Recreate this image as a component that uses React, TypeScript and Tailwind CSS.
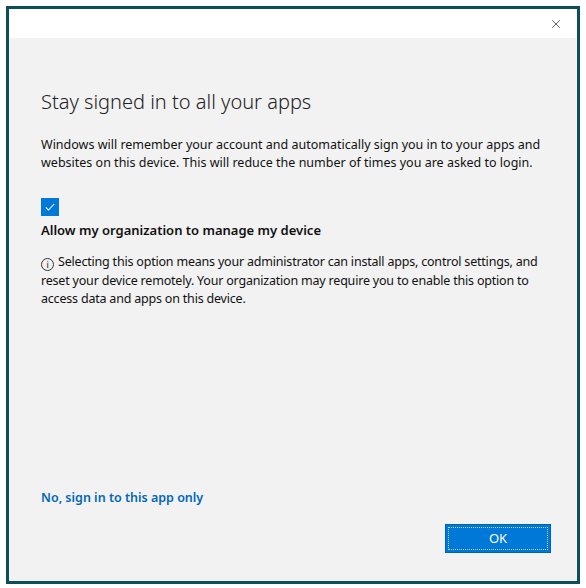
import { X } from "lucide-react";

export default function App() {
  return (
    <div className="h-[588px] w-[586px] bg-white pl-[6px] pt-[6px]" style={{ fontFamily: '"Noto Sans", "Open Sans", sans-serif' }}>
      <div className="flex h-[578px] w-[574px] flex-col border-[3px] border-[#0d4e5c] bg-[#f2f2f2]">
        <div className="flex h-[29px] items-center justify-end bg-white pr-[14px]">
          <X className="h-[14px] w-[14px] text-[#333]" strokeWidth={1.3} />
        </div>
        <div className="flex flex-1 flex-col pl-[32px] pr-[26px] pb-[28px]">
          <h1 className="mt-[50px] text-[20px] font-light leading-[28px] text-[#222]">Stay signed in to all your apps</h1>
          <p className="mt-[20px] text-[12.5px] leading-[18px] text-[#111]">
            Windows will remember your account and automatically sign you in to your apps and websites on this device. This will reduce the number of times you are asked to login.
          </p>
          <div className="mt-[26px] flex h-[18px] w-[18px] items-center justify-center bg-[#0078d7]">
            <svg viewBox="0 0 16 16" className="h-[12px] w-[12px]" fill="none" stroke="white" strokeWidth="1.4">
              <path d="M2.5 8.5l3.5 3.5 7.5-8" />
            </svg>
          </div>
          <div className="mt-[5px] text-[13px] font-semibold leading-[18px] text-[#111]">Allow my organization to manage my device</div>
          <p className="mt-[14px] text-[12.5px] leading-[18.5px] tracking-[-0.2px] text-[#111]">
            <span className="mr-[4px] inline-flex h-[13px] w-[13px] items-center justify-center rounded-full border border-[#333] align-[-2px] text-[9px] leading-none">i</span>
            Selecting this option means your administrator can install apps, control settings, and reset your device remotely. Your organization may require you to enable this option to access data and apps on this device.
          </p>
          <div className="flex-1" />
          <div className="text-[12.5px] font-semibold text-[#0067b8]">No, sign in to this app only</div>
          <div className="mt-[16px] flex justify-end">
            <button className="flex h-[29px] w-[106px] items-center justify-center border border-[#0063b1] bg-[#0078d7] p-[2px]">
              <span className="flex h-full w-full items-center justify-center border border-dotted border-white/70 text-[13px] text-white">OK</span>
            </button>
          </div>
        </div>
      </div>
    </div>
  );
}
